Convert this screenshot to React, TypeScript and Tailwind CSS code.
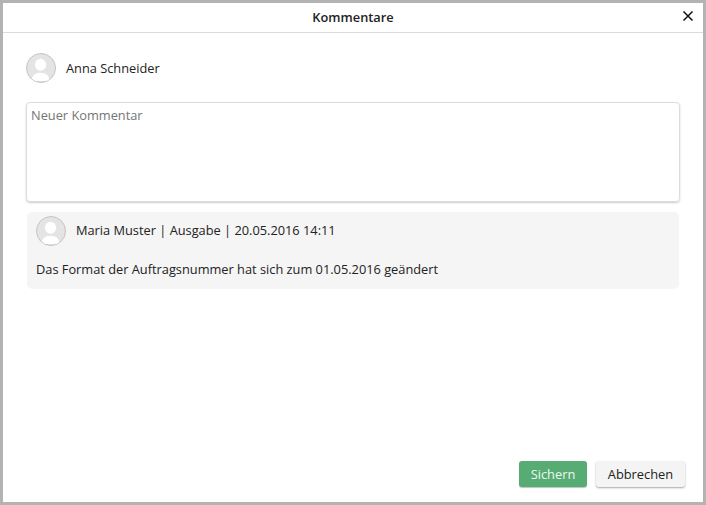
import React from "react";

function Avatar() {
  return (
    <div className="w-[30px] h-[30px] rounded-full border border-[#c4c4c4] bg-[#e4e4e4] overflow-hidden shrink-0">
      <svg viewBox="0 0 30 30" className="w-full h-full block">
        <ellipse cx="14.5" cy="11.5" rx="6" ry="6.5" fill="#fff" />
        <path d="M4.5 29c1-6 4-9 10-9s9 3 10 9z" fill="#fff" />
      </svg>
    </div>
  );
}

export default function App() {
  return (
    <div className="w-[706px] h-[505px] bg-white border-[3px] border-[#b3b3b3] flex flex-col font-['Open_Sans',sans-serif] text-[12.8px] text-[#222]">
      <div className="h-[30px] shrink-0 border-b border-[#dcdcdc] flex items-center justify-center relative">
        <span className="font-semibold text-[12.8px] text-[#222] mt-[1px]">Kommentare</span>
        <svg viewBox="0 0 12 12" className="absolute right-[9px] top-[7px] w-[12px] h-[12px]">
          <path d="M1.5 1.5l9 9M10.5 1.5l-9 9" stroke="#111" strokeWidth="1.5" fill="none" />
        </svg>
      </div>
      <div className="flex-1 flex flex-col px-[23px] pt-[20px]">
        <div className="flex items-center gap-[10px] h-[30px]">
          <Avatar />
          <span className="mt-[2px]">Anna Schneider</span>
        </div>
        <textarea
          placeholder="Neuer Kommentar"
          className="mt-[19px] w-[654px] h-[100px] block resize-none rounded-[4px] border border-[#dcdcdc] shadow-[0_1px_2px_rgba(0,0,0,0.2)] px-[4px] py-[3px] outline-none placeholder:text-[#757575] text-[12.8px]"
        />
        <div className="mt-[10px] mx-[1px] h-[76px] bg-[#f5f5f5] rounded-[5px] shadow-[0_1px_1px_rgba(0,0,0,0.04)] px-[9px] pt-[4px]">
          <div className="flex items-center gap-[10px] h-[30px]">
            <Avatar />
            <span>Maria Muster | Ausgabe | 20.05.2016 14:11</span>
          </div>
          <p className="mt-[14px] leading-[18px]">Das Format der Auftragsnummer hat sich zum 01.05.2016 geändert</p>
        </div>
        <div className="mt-auto mb-[15px] flex justify-end gap-[9px] mr-[-5px] text-[12.85px]">
          <button className="w-[68px] h-[26px] pt-[2px] rounded-[3px] bg-[#57ac73] text-[#eef7f0] shadow-[0_1px_1px_rgba(0,0,0,0.25)]">Sichern</button>
          <button className="w-[89px] h-[26px] pt-[2px] rounded-[3px] bg-[#f4f4f4] text-[#222] shadow-[0_1px_2px_rgba(0,0,0,0.35)]">Abbrechen</button>
        </div>
      </div>
    </div>
  );
}
